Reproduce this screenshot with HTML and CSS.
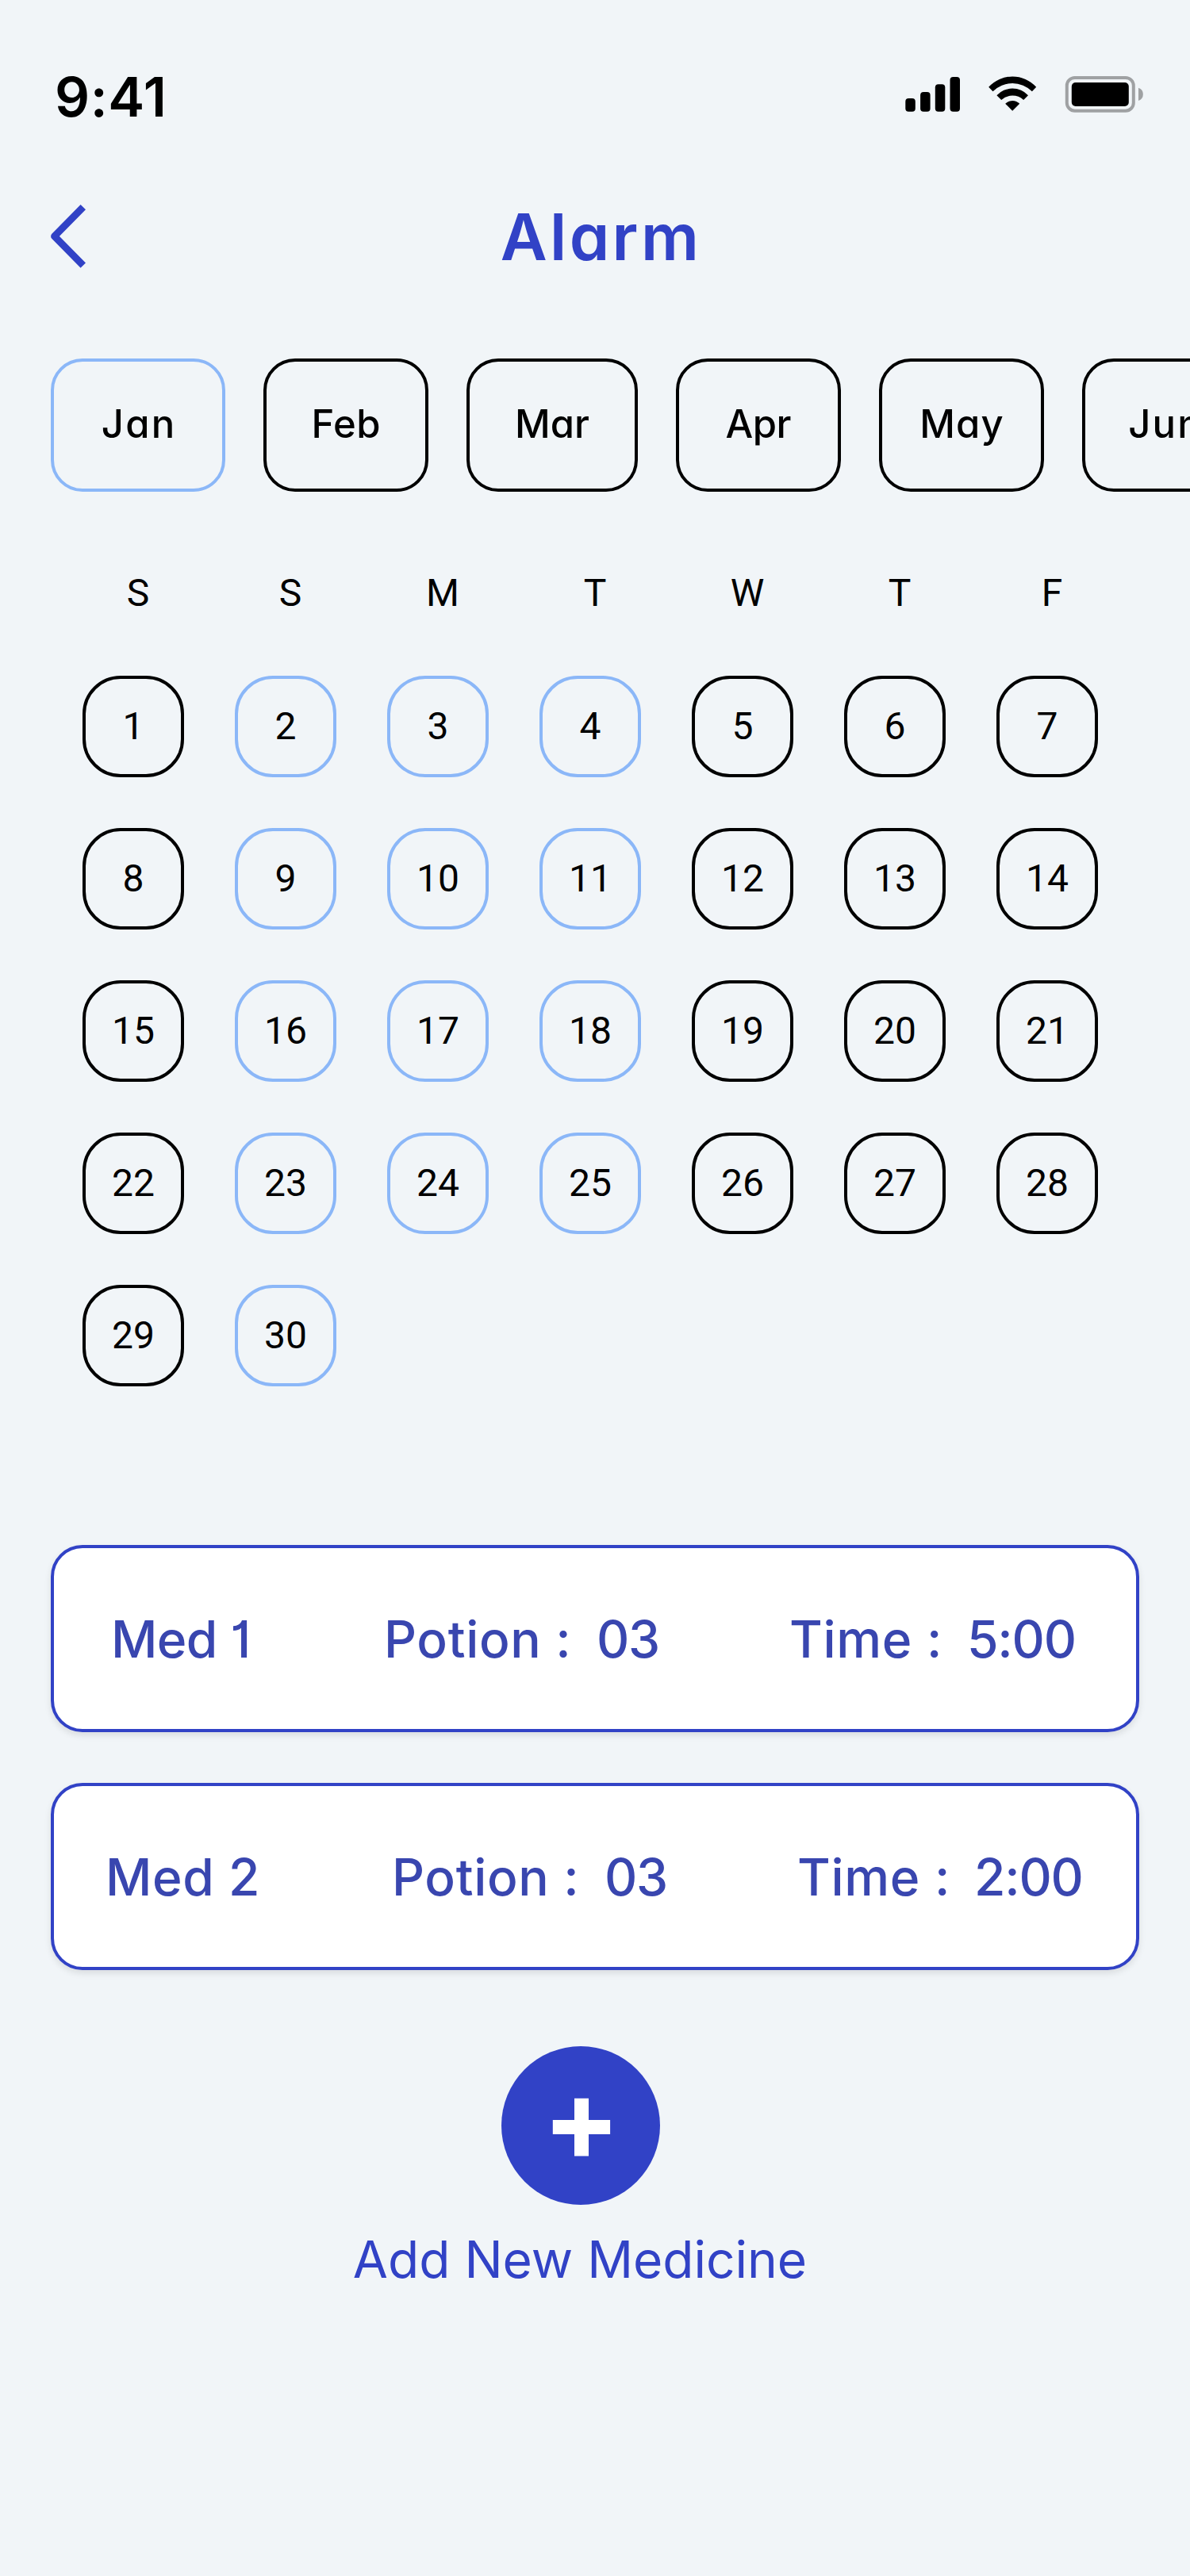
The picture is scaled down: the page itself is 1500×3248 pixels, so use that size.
FILE: index.html
```html
<!DOCTYPE html>
<html lang="en">
<head>
<meta charset="utf-8">
<title>Alarm</title>
<link rel="stylesheet" href="styles.css">
</head>
<body>
<main class="screen">
  <div class="status">
    <span class="time">9:41</span>
    <div class="status-icons">
      <svg class="signal" viewBox="1141 94 70 48" width="70" height="48">
        <rect x="1141.3" y="124" width="12.5" height="16.7" rx="4"/>
        <rect x="1160.1" y="116" width="12.5" height="24.7" rx="4"/>
        <rect x="1178.8" y="106.3" width="12.5" height="34.4" rx="4"/>
        <rect x="1197.5" y="97" width="12.5" height="43.7" rx="4"/>
      </svg>
      <svg class="wifi" viewBox="1244 94 64 48" width="64" height="48">
        <path d="M1246.2 109.7A40.5 40.5 0 0 1 1306.2 109.7L1300.9 115.2A35 35 0 0 0 1251.5 115.2Z"/>
        <path d="M1256.4 120.2A27 27 0 0 1 1296 120.2L1290.2 126A20.8 20.8 0 0 0 1262.2 126Z"/>
        <path d="M1267.2 130.8A12.5 12.5 0 0 1 1285.2 130.8L1276.2 139.8Z"/>
      </svg>
      <svg class="battery" viewBox="1342 94 100 50" width="100" height="50">
        <rect class="shell" x="1344.8" y="98" width="84" height="41.7" rx="10"/>
        <path class="cap" d="M1435 110.7A8.6 8.6 0 0 1 1435 127Z"/>
        <rect x="1350.8" y="104" width="72" height="30" rx="5"/>
      </svg>
    </div>
  </div>

  <header class="header">
    <svg class="back" viewBox="62 256 48 84" width="48" height="84">
      <path d="M104.8 261.2L68.6 297.9L104.8 334.6"/>
    </svg>
    <h1 class="title">Alarm</h1>
  </header>

  <nav class="months">
    <div class="month selected"><span class="jan">Jan</span></div>
    <div class="month"><span class="feb">Feb</span></div>
    <div class="month wide"><span class="mar">Mar</span></div>
    <div class="month"><span class="apr">Apr</span></div>
    <div class="month"><span class="may">May</span></div>
    <div class="month"><span class="jun">Jun</span></div>
  </nav>

  <div class="weekdays">
    <span>S</span><span>S</span><span>M</span><span>T</span><span>W</span><span>T</span><span>F</span>
  </div>

  <div class="days">
    <span>1</span><span class="on">2</span><span class="on">3</span><span class="on">4</span><span>5</span><span>6</span><span>7</span>
    <span>8</span><span class="on">9</span><span class="on">10</span><span class="on">11</span><span>12</span><span>13</span><span>14</span>
    <span>15</span><span class="on">16</span><span class="on">17</span><span class="on">18</span><span>19</span><span>20</span><span>21</span>
    <span>22</span><span class="on">23</span><span class="on">24</span><span class="on">25</span><span>26</span><span>27</span><span>28</span>
    <span>29</span><span class="on">30</span>
  </div>

  <section class="meds">
    <article class="med first">
      <span class="name">Med 1</span><span class="label">Potion :</span><span class="value">03</span><span class="label">Time :</span><span class="value">5:00</span>
    </article>
    <article class="med second">
      <span class="name">Med 2</span><span class="label">Potion :</span><span class="value">03</span><span class="label">Time :</span><span class="value">2:00</span>
    </article>
  </section>

  <div class="add">
    <div class="add-button">
      <svg viewBox="0 0 200 200" width="200" height="200">
        <path d="M92 65.7h18v27.4h27.1v18H110v27.4H92v-27.4H64.8v-18H92z"/>
      </svg>
    </div>
    <span class="add-label">Add New Medicine</span>
  </div>
</main>
</body>
</html>
```
FILE: styles.css
```css
* { box-sizing: border-box; }

body {
  margin: 0;
  background: #f1f5f8;
  color: #000;
  font-family: Inter, "Liberation Sans", sans-serif;
}

svg { display: block; }

.screen {
  width: 1500px;
  height: 3248px;
  overflow: hidden;
}

.status {
  display: flex;
  justify-content: space-between;
  align-items: flex-start;
  height: 248px;
  padding: 94px 58px 0 69px;
}

.time {
  font-size: 69px;
  font-weight: 600;
  line-height: 56px;
  letter-spacing: 0.6px;
}

.status-icons { display: flex; }
.signal { margin-right: 33px; }
.wifi { margin-right: 34px; }
.shell { fill: none; stroke: #9fa1a3; stroke-width: 4; }
.cap { fill: #9fa1a3; }

.header {
  display: flex;
  align-items: center;
  height: 102px;
  padding: 0 62px;
}

.back { margin-bottom: 2px; }

.back path {
  fill: none;
  stroke: #3142c6;
  stroke-width: 9;
  stroke-linejoin: round;
}

.title {
  flex: 1;
  margin: 0;
  padding-right: 33px;
  text-align: center;
  font-size: 81px;
  font-weight: 600;
  line-height: 102px;
  letter-spacing: 3.4px;
  color: #3142c6;
  font-feature-settings: "cv11";
}

.months {
  display: flex;
  gap: 48px;
  margin-top: 102px;
  padding-left: 64px;
}

.month {
  display: flex;
  flex: none;
  align-items: center;
  justify-content: center;
  width: 208px;
  height: 168px;
  padding-bottom: 3px;
  border: 4px solid #000;
  border-radius: 40px;
  font-size: 49px;
  font-weight: 500;
  font-feature-settings: "cv11";
}

.month.selected { width: 220px; border-color: #8bb7f8; }
.month.wide { width: 216px; }

.month span {
  letter-spacing: var(--track);
  margin-right: calc(var(--track) * -1);
}

.jan, .jun { --track: 2.2px; }
.feb { --track: 0.5px; }
.mar { --track: 0px; }
.apr { --track: -0.6px; }
.may { --track: 1.2px; }

.weekdays, .days {
  display: grid;
  grid-template-columns: repeat(7, 128px);
  column-gap: 64px;
  font-family: Roboto, "Liberation Sans", sans-serif;
  font-size: 48px;
}

.weekdays {
  margin-top: 100px;
  padding-left: 110px;
  line-height: 56px;
  text-align: center;
}

.days {
  row-gap: 64px;
  margin-top: 76px;
  padding-left: 104px;
}

.days span {
  display: flex;
  align-items: center;
  justify-content: center;
  height: 128px;
  padding-bottom: 2px;
  border: 4px solid #000;
  border-radius: 48px;
}

.days .on { border-color: #8bb7f8; }

.meds {
  display: flex;
  flex-direction: column;
  gap: 64px;
  margin-top: 200px;
  padding: 0 64px;
}

.med {
  display: grid;
  align-items: center;
  height: 236px;
  padding-top: 1px;
  background: #fff;
  border: 4px solid #3142c6;
  border-radius: 40px;
  box-shadow: 0 4px 8px rgba(0, 0, 0, 0.1);
  color: #3946af;
  font-size: 64px;
  font-weight: 500;
  white-space: nowrap;
}

.first { grid-template-columns: 344px 268px 243px 224px auto; padding-left: 72px; }
.second { grid-template-columns: 361px 268px 243px 223px auto; padding-left: 65px; }
.first .name { letter-spacing: -0.6px; font-feature-settings: "cv01"; }
.second .name { letter-spacing: 0.6px; }
.label { letter-spacing: 0.7px; }
.value { letter-spacing: -1.2px; }

.add {
  display: flex;
  flex-direction: column;
  align-items: center;
  margin-top: 96px;
  padding-right: 36px;
}

.add-button {
  width: 200px;
  height: 200px;
  border-radius: 50%;
  background: #3142c6;
}

.add-button path { fill: #fff; }

.add-label {
  margin-top: 29px;
  padding-right: 2px;
  font-size: 64px;
  line-height: 80px;
  color: #3142c6;
}
```
